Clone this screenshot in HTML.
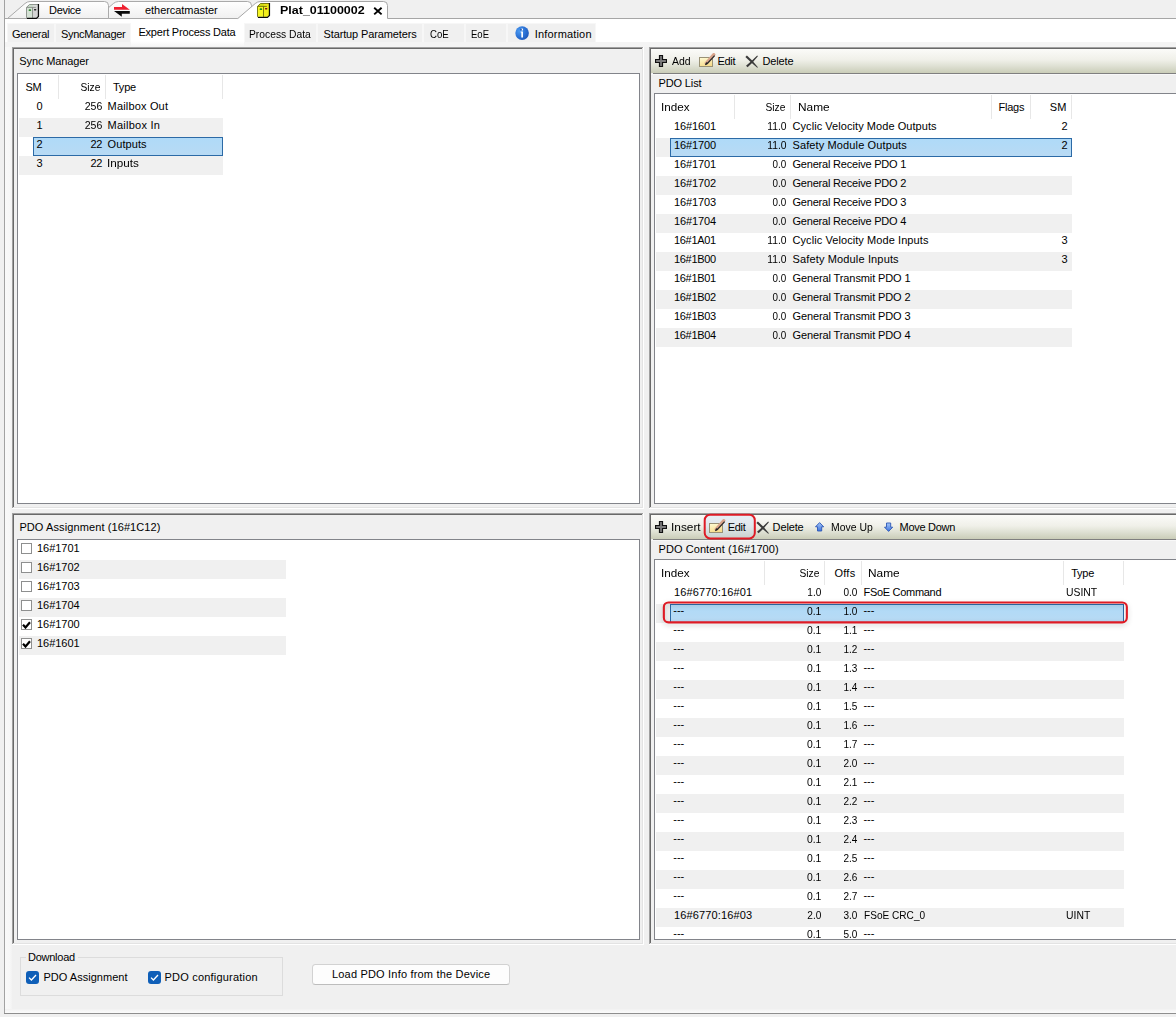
<!DOCTYPE html>
<html lang="en"><head><meta charset="utf-8"><title>Plat_01100002 - Expert Process Data</title>
<style>
html,body{margin:0;padding:0}
body{width:1176px;height:1017px;overflow:hidden;position:relative;background:#f0f0f0;font-family:"Liberation Sans",sans-serif;font-size:11px;color:#000}
body>div,body>svg,.t{position:absolute}
div{box-sizing:border-box}
.t{white-space:pre;line-height:13px;height:13px}
.b{font-weight:bold}
.lv{background:#fff;border:1px solid #82848a}
.tb{background:linear-gradient(#fbfbf9,#f0f0e9 45%,#dfe1d4 70%,#cacdb8)}

</style></head>
<body>
<div style="left:5px;top:19px;width:1171px;height:23px;background:#fff"></div>
<div style="left:5px;top:42px;width:7px;height:971px;background:linear-gradient(90deg,#f9f9f9,#f7f7f7 70%,#f2f2f2)"></div>
<div style="left:5px;top:1009px;width:1171px;height:4px;background:linear-gradient(#f2f2f2,#fbfbfb)"></div>
<div style="left:4px;top:18px;width:1172px;height:1px;background:#a6a6a6"></div>
<div style="left:4px;top:0px;width:1px;height:1014px;background:#a2a2a2"></div>
<div style="left:5px;top:42px;width:1171px;height:5px;background:#f4f4f4"></div>
<div style="left:4px;top:1013px;width:1172px;height:1px;background:#8e8e8e"></div>
<svg style="left:0;top:0" width="1176" height="20" viewBox="0 0 1176 20">
<defs><linearGradient id="tg" x1="0" y1="0" x2="0" y2="1"><stop offset="0" stop-color="#ffffff"/><stop offset="1" stop-color="#f0f0f0"/></linearGradient></defs>
<path d="M95.9 18.5 L113.4 3.5 Q115.4 1.6 118.6 1.5 L247.5 1.5 Q251.5 1.5 251.5 5.5 L251.5 18.5 Z" fill="url(#tg)" stroke="#aaa"/>
<path d="M7.5 18.5 L25 3.5 Q27 1.6 30.2 1.5 L104.5 1.5 Q108.5 1.5 108.5 5.5 L108.5 18.5 Z" fill="url(#tg)" stroke="#aaa"/>
<path d="M236.8 19.5 L255.3 3.5 Q257.3 1.6 260.5 1.5 L383.5 1.5 Q387.5 1.5 387.5 5.5 L387.5 19.5 Z" fill="#fff" stroke="none"/>
<path d="M237.8 18.5 L255.3 3.5 Q257.3 1.6 260.5 1.5 L383.5 1.5 Q387.5 1.5 387.5 5.5 L387.5 18.5" fill="none" stroke="#a6a6a6"/>
</svg>
<div style="left:7px;top:23px;width:48px;height:19px;background:#f0f0f0;border:1px solid #f7f7f7;border-bottom:0"></div>
<div style="left:55px;top:23px;width:76px;height:19px;background:#f0f0f0;border:1px solid #f7f7f7;border-bottom:0"></div>
<div style="left:244px;top:23px;width:73px;height:19px;background:#f0f0f0;border:1px solid #f7f7f7;border-bottom:0"></div>
<div style="left:317px;top:23px;width:106px;height:19px;background:#f0f0f0;border:1px solid #f7f7f7;border-bottom:0"></div>
<div style="left:423px;top:23px;width:42px;height:19px;background:#f0f0f0;border:1px solid #f7f7f7;border-bottom:0"></div>
<div style="left:465px;top:23px;width:42px;height:19px;background:#f0f0f0;border:1px solid #f7f7f7;border-bottom:0"></div>
<div style="left:507px;top:23px;width:89px;height:19px;background:#f0f0f0;border:1px solid #f7f7f7;border-bottom:0"></div>
<div style="left:131px;top:21px;width:113px;height:25px;background:linear-gradient(#fff 80%,#f6f6f6)"></div>
<div style="left:12px;top:47px;width:632px;height:1px;background:#a0a0a0"></div>
<div style="left:12px;top:47px;width:1px;height:462px;background:#a0a0a0"></div>
<div style="left:13px;top:48px;width:630px;height:1px;background:#696969"></div>
<div style="left:13px;top:48px;width:1px;height:460px;background:#696969"></div>
<div style="left:13px;top:507px;width:630px;height:1px;background:#e3e3e3"></div>
<div style="left:642px;top:48px;width:1px;height:460px;background:#e3e3e3"></div>
<div style="left:12px;top:508px;width:632px;height:1px;background:#fff"></div>
<div style="left:643px;top:47px;width:1px;height:462px;background:#fff"></div>
<div style="left:649px;top:47px;width:600px;height:1px;background:#a0a0a0"></div>
<div style="left:649px;top:47px;width:1px;height:462px;background:#a0a0a0"></div>
<div style="left:650px;top:48px;width:598px;height:1px;background:#696969"></div>
<div style="left:650px;top:48px;width:1px;height:460px;background:#696969"></div>
<div style="left:650px;top:507px;width:598px;height:1px;background:#e3e3e3"></div>
<div style="left:1247px;top:48px;width:1px;height:460px;background:#e3e3e3"></div>
<div style="left:649px;top:508px;width:600px;height:1px;background:#fff"></div>
<div style="left:1248px;top:47px;width:1px;height:462px;background:#fff"></div>
<div style="left:12px;top:513px;width:632px;height:1px;background:#a0a0a0"></div>
<div style="left:12px;top:513px;width:1px;height:432px;background:#a0a0a0"></div>
<div style="left:13px;top:514px;width:630px;height:1px;background:#696969"></div>
<div style="left:13px;top:514px;width:1px;height:430px;background:#696969"></div>
<div style="left:13px;top:943px;width:630px;height:1px;background:#e3e3e3"></div>
<div style="left:642px;top:514px;width:1px;height:430px;background:#e3e3e3"></div>
<div style="left:12px;top:944px;width:632px;height:1px;background:#fff"></div>
<div style="left:643px;top:513px;width:1px;height:432px;background:#fff"></div>
<div style="left:649px;top:513px;width:600px;height:1px;background:#a0a0a0"></div>
<div style="left:649px;top:513px;width:1px;height:432px;background:#a0a0a0"></div>
<div style="left:650px;top:514px;width:598px;height:1px;background:#696969"></div>
<div style="left:650px;top:514px;width:1px;height:430px;background:#696969"></div>
<div style="left:650px;top:943px;width:598px;height:1px;background:#e3e3e3"></div>
<div style="left:1247px;top:514px;width:1px;height:430px;background:#e3e3e3"></div>
<div style="left:649px;top:944px;width:600px;height:1px;background:#fff"></div>
<div style="left:1248px;top:513px;width:1px;height:432px;background:#fff"></div>
<div class="lv" style="left:17px;top:73px;width:623px;height:431px"></div>
<div style="left:58px;top:75px;width:1px;height:24px;background:#e7e7e7"></div>
<div style="left:105px;top:75px;width:1px;height:24px;background:#e7e7e7"></div>
<div style="left:222px;top:75px;width:1px;height:24px;background:#e7e7e7"></div>
<div style="left:19px;top:118px;width:204px;height:19px;background:#f0f0f0"></div>
<div style="left:33px;top:137px;width:190px;height:19px;background:linear-gradient(#afdaf8,#b8daf4);border:1px solid #2c6aa6"></div>
<div style="left:19px;top:156px;width:204px;height:19px;background:#f0f0f0"></div>
<div class="tb" style="left:651px;top:49px;width:600px;height:24px"></div>
<div style="left:653px;top:73px;width:600px;height:1px;background:#7f7f7f"></div>
<div style="left:651px;top:74px;width:600px;height:1px;background:#f8f8f8"></div>
<div class="lv" style="left:654px;top:93px;width:600px;height:411px"></div>
<div style="left:734px;top:95px;width:1px;height:24px;background:#e7e7e7"></div>
<div style="left:790px;top:95px;width:1px;height:24px;background:#e7e7e7"></div>
<div style="left:991px;top:95px;width:1px;height:24px;background:#e7e7e7"></div>
<div style="left:1030px;top:95px;width:1px;height:24px;background:#e7e7e7"></div>
<div style="left:1071px;top:95px;width:1px;height:24px;background:#e7e7e7"></div>
<div style="left:656px;top:138px;width:416px;height:19px;background:#f0f0f0"></div>
<div style="left:670px;top:138px;width:402px;height:19px;background:linear-gradient(#afdaf8,#b8daf4);border:1px solid #2c6aa6"></div>
<div style="left:656px;top:176px;width:416px;height:19px;background:#f0f0f0"></div>
<div style="left:656px;top:214px;width:416px;height:19px;background:#f0f0f0"></div>
<div style="left:656px;top:252px;width:416px;height:19px;background:#f0f0f0"></div>
<div style="left:656px;top:290px;width:416px;height:19px;background:#f0f0f0"></div>
<div style="left:656px;top:328px;width:416px;height:19px;background:#f0f0f0"></div>
<div class="lv" style="left:17px;top:539px;width:623px;height:401px"></div>
<div style="left:21px;top:543px;width:11px;height:11px;background:#fff;border:1px solid #8e8f8f"></div>
<div style="left:19px;top:560px;width:267px;height:19px;background:#f0f0f0"></div>
<div style="left:21px;top:562px;width:11px;height:11px;background:#fff;border:1px solid #8e8f8f"></div>
<div style="left:21px;top:581px;width:11px;height:11px;background:#fff;border:1px solid #8e8f8f"></div>
<div style="left:19px;top:598px;width:267px;height:19px;background:#f0f0f0"></div>
<div style="left:21px;top:600px;width:11px;height:11px;background:#fff;border:1px solid #8e8f8f"></div>
<div style="left:21px;top:619px;width:11px;height:11px;background:#fff;border:1px solid #8e8f8f"><svg width="9" height="9" viewBox="0 0 9 9" style="position:absolute;left:0;top:0"><path d="M1 4.7 L3.5 7.5 L8 2.2" fill="none" stroke="#000" stroke-width="2.2"/></svg></div>
<div style="left:19px;top:636px;width:267px;height:19px;background:#f0f0f0"></div>
<div style="left:21px;top:638px;width:11px;height:11px;background:#fff;border:1px solid #8e8f8f"><svg width="9" height="9" viewBox="0 0 9 9" style="position:absolute;left:0;top:0"><path d="M1 4.7 L3.5 7.5 L8 2.2" fill="none" stroke="#000" stroke-width="2.2"/></svg></div>
<div class="tb" style="left:651px;top:515px;width:600px;height:24px"></div>
<div style="left:653px;top:539px;width:600px;height:1px;background:#7f7f7f"></div>
<div style="left:651px;top:540px;width:600px;height:1px;background:#f8f8f8"></div>
<div class="lv" style="left:654px;top:559px;width:600px;height:381px"></div>
<div style="left:764px;top:561px;width:1px;height:24px;background:#e7e7e7"></div>
<div style="left:824px;top:561px;width:1px;height:24px;background:#e7e7e7"></div>
<div style="left:861px;top:561px;width:1px;height:24px;background:#e7e7e7"></div>
<div style="left:1063px;top:561px;width:1px;height:24px;background:#e7e7e7"></div>
<div style="left:1123px;top:561px;width:1px;height:24px;background:#e7e7e7"></div>
<div style="left:656px;top:604px;width:468px;height:19px;background:#f0f0f0"></div>
<div style="left:670px;top:604px;width:454px;height:19px;background:linear-gradient(#afdaf8,#b8daf4);border:1px solid #2c6aa6"></div>
<div style="left:656px;top:642px;width:468px;height:19px;background:#f0f0f0"></div>
<div style="left:656px;top:680px;width:468px;height:19px;background:#f0f0f0"></div>
<div style="left:656px;top:718px;width:468px;height:19px;background:#f0f0f0"></div>
<div style="left:656px;top:756px;width:468px;height:19px;background:#f0f0f0"></div>
<div style="left:656px;top:794px;width:468px;height:19px;background:#f0f0f0"></div>
<div style="left:656px;top:832px;width:468px;height:19px;background:#f0f0f0"></div>
<div style="left:656px;top:870px;width:468px;height:19px;background:#f0f0f0"></div>
<div style="left:656px;top:908px;width:468px;height:19px;background:#f0f0f0"></div>
<svg style="left:26px;top:4px" width="14" height="16" viewBox="0 0 14 16"><path d="M0.5 3.4 L3.5 0.5 L12 0.5 L12 12.2 L10.2 13.8 L0.5 13.8 Z" fill="#d5e2d5"/>
<path d="M6.5 0.5 L12 0.5 L12 12.2 L10.2 13.8 L6.5 13.8 Z" fill="#d4d4d4"/>
<path d="M0.5 3.4 L3.5 0.5 L12 0.5 L9.6 3.4 Z" fill="#c9dcc9"/>
<path d="M6.8 0.5 L12 0.5 L9.6 3.4 L6.8 3.4 Z" fill="#dadada"/>
<path d="M0.5 13.8 L0.5 3.4 L3.5 0.5 L12 0.5 M0.5 3.4 L9.8 3.4 M6.5 3.4 L6.5 13.8" fill="none" stroke="#868c86" stroke-width="0.9"/>
<path d="M12.45 0.1 L12.45 12.5 L10.4 14.35 L0.9 14.35" fill="none" stroke="#0a0a0a" stroke-width="1.25"/>
<rect x="2.7" y="5.3" width="2.4" height="1.8" rx="0.6" fill="#3a8a3a"/>
<rect x="8" y="4.9" width="2.3" height="1.5" rx="0.4" fill="#2c2c2c"/></svg>
<svg style="left:257px;top:3px" width="14" height="16" viewBox="0 0 14 16"><path d="M0.5 3.4 L3.5 0.5 L12 0.5 L12 12.2 L10.2 13.8 L0.5 13.8 Z" fill="#f6f622"/>
<path d="M6.5 0.5 L12 0.5 L12 12.2 L10.2 13.8 L6.5 13.8 Z" fill="#f2ee1a"/>
<path d="M0.5 3.4 L3.5 0.5 L12 0.5 L9.6 3.4 Z" fill="#d2de14"/>
<path d="M6.8 0.5 L12 0.5 L9.6 3.4 L6.8 3.4 Z" fill="#f0e61a"/>
<path d="M0.5 13.8 L0.5 3.4 L3.5 0.5 L12 0.5 M0.5 3.4 L9.8 3.4 M6.5 3.4 L6.5 13.8" fill="none" stroke="#6e6e0a" stroke-width="0.9"/>
<path d="M12.45 0.1 L12.45 12.5 L10.4 14.35 L0.9 14.35" fill="none" stroke="#0a0a0a" stroke-width="1.25"/>
<rect x="2.7" y="5.3" width="2.4" height="1.8" rx="0.6" fill="#1c8c1c"/>
<rect x="8" y="4.9" width="2.3" height="1.5" rx="0.4" fill="#861414"/></svg>
<svg style="left:113px;top:3px" width="18" height="15" viewBox="0 0 18 15"><path d="M1 4 L9 4 L9 1 L16.8 6.8 L1 6.8 Z" fill="#ee2030"/><path d="M1 8 L16.8 8 L16.8 10.8 L8.8 10.8 L8.8 13.8 Z" fill="#0a0a0a"/></svg>
<svg style="left:372px;top:6px" width="12" height="10" viewBox="0 0 12 10"><path d="M2.2 1.8 L9.6 8.4 M9.6 1.8 L2.2 8.4" stroke="#000" stroke-width="1.9" fill="none"/></svg>
<svg style="left:514px;top:25px" width="16" height="16" viewBox="0 0 16 16"><defs><radialGradient id="ig" cx="0.3" cy="0.35" r="0.8"><stop offset="0" stop-color="#4a9af2"/><stop offset="0.6" stop-color="#2a6fd2"/><stop offset="1" stop-color="#1c54b4"/></radialGradient></defs>
<circle cx="8.1" cy="8.1" r="6.8" fill="url(#ig)"/><rect x="7.2" y="3.6" width="1.8" height="1.9" fill="#fff"/><rect x="6.6" y="3.9" width="1" height="1.5" fill="#0c2a7a"/><path d="M6.6 6.6 L9 6.6 L9 12.4 L7.3 12.4 L7.3 7.6 L6.6 7.6 Z" fill="#fff"/></svg>
<svg style="left:700px;top:510px" width="60" height="34" viewBox="0 0 60 34"><rect x="4.7" y="4.7" width="50.1" height="23.7" rx="5.5" fill="rgba(196,216,242,0.35)" stroke="#de1b25" stroke-width="2"/></svg>
<svg style="left:655px;top:55px" width="12" height="12" viewBox="0 0 12 12"><path d="M4.5 0.5 L7.5 0.5 L7.5 4.5 L11.5 4.5 L11.5 7.5 L7.5 7.5 L7.5 11.5 L4.5 11.5 L4.5 7.5 L0.5 7.5 L0.5 4.5 L4.5 4.5 Z" fill="#7c7c7c" stroke="#111" stroke-width="1.2"/></svg>
<svg style="left:699px;top:52.5px" width="17" height="15" viewBox="0 0 17 15"><defs><linearGradient id="eg" x1="0" y1="0" x2="0.3" y2="1"><stop offset="0" stop-color="#fffcd8"/><stop offset="1" stop-color="#f7dd8e"/></linearGradient></defs>
<rect x="0.5" y="4.5" width="13" height="9" fill="url(#eg)" stroke="#9a9276"/>
<path d="M7.2 10.2 L14.8 1.6" stroke="#d9a58c" stroke-width="3.2" stroke-linecap="round" fill="none"/>
<path d="M6.3 11.6 L8.4 10.4 L15.6 2.6" stroke="#2c2c2c" stroke-width="1.3" fill="none"/>
<path d="M6 11.8 L7.6 9 L8.8 10.3 Z" fill="#222"/></svg>
<svg style="left:745px;top:54.5px" width="14" height="14" viewBox="0 0 14 14"><path d="M0.4 1.9 L1.9 0.4 L7.4 5.8 L12.9 12.2 L12.3 12.8 L5.9 7.3 Z" fill="#3a3a3a"/><path d="M12.2 0.6 L12.9 1.3 L7.6 7.6 L2.6 12.3 L1 10.7 L6.2 6.2 Z" fill="#3a3a3a"/></svg>
<svg style="left:655px;top:521px" width="12" height="12" viewBox="0 0 12 12"><path d="M4.5 0.5 L7.5 0.5 L7.5 4.5 L11.5 4.5 L11.5 7.5 L7.5 7.5 L7.5 11.5 L4.5 11.5 L4.5 7.5 L0.5 7.5 L0.5 4.5 L4.5 4.5 Z" fill="#7c7c7c" stroke="#111" stroke-width="1.2"/></svg>
<svg style="left:709px;top:518.5px" width="17" height="15" viewBox="0 0 17 15"><defs><linearGradient id="eg" x1="0" y1="0" x2="0.3" y2="1"><stop offset="0" stop-color="#fffcd8"/><stop offset="1" stop-color="#f7dd8e"/></linearGradient></defs>
<rect x="0.5" y="4.5" width="13" height="9" fill="url(#eg)" stroke="#9a9276"/>
<path d="M7.2 10.2 L14.8 1.6" stroke="#d9a58c" stroke-width="3.2" stroke-linecap="round" fill="none"/>
<path d="M6.3 11.6 L8.4 10.4 L15.6 2.6" stroke="#2c2c2c" stroke-width="1.3" fill="none"/>
<path d="M6 11.8 L7.6 9 L8.8 10.3 Z" fill="#222"/></svg>
<svg style="left:756px;top:520.5px" width="14" height="14" viewBox="0 0 14 14"><path d="M0.4 1.9 L1.9 0.4 L7.4 5.8 L12.9 12.2 L12.3 12.8 L5.9 7.3 Z" fill="#3a3a3a"/><path d="M12.2 0.6 L12.9 1.3 L7.6 7.6 L2.6 12.3 L1 10.7 L6.2 6.2 Z" fill="#3a3a3a"/></svg>
<svg style="left:815.2px;top:521.6px" width="10" height="10" viewBox="0 0 10 10"><defs><linearGradient id="ug" x1="0" y1="0" x2="0" y2="1"><stop offset="0" stop-color="#a6c8fa"/><stop offset="1" stop-color="#3f74dc"/></linearGradient></defs>
<path d="M4.6 0.6 L8.7 4.8 L6.7 4.8 L6.7 9 L2.5 9 L2.5 4.8 L0.5 4.8 Z" fill="url(#ug)" stroke="#2d57b4" stroke-width="0.9"/></svg>
<svg style="left:884px;top:522.2px" width="10" height="10" viewBox="0 0 10 10"><defs><linearGradient id="dg" x1="0" y1="0" x2="0" y2="1"><stop offset="0" stop-color="#a6c8fa"/><stop offset="1" stop-color="#3f74dc"/></linearGradient></defs>
<path d="M4.6 9.4 L8.7 5.2 L6.7 5.2 L6.7 1 L2.5 1 L2.5 5.2 L0.5 5.2 Z" fill="url(#dg)" stroke="#2d57b4" stroke-width="0.9"/></svg>
<svg style="left:656px;top:596px;filter:drop-shadow(0 2px 2.5px rgba(0,0,0,.2))" width="480" height="36" viewBox="0 0 480 36"><rect x="7.85" y="6.5" width="463" height="19.9" rx="4.6" fill="none" stroke="#de1b25" stroke-width="2.1"/></svg>
<div style="left:20px;top:957px;width:263px;height:39px;border:1px solid #dcdcdc"></div>
<div style="left:26px;top:951px;width:52px;height:12px;background:#f0f0f0"></div>
<div style="left:26px;top:971px;width:13px;height:13px;background:#0f5fb8;border-radius:3px"><svg width="13" height="13" viewBox="0 0 13 13" style="position:absolute;left:0;top:0"><path d="M3 6.6 L5.4 9 L10 4" fill="none" stroke="#fff" stroke-width="1.3"/></svg></div>
<div style="left:148px;top:971px;width:13px;height:13px;background:#0f5fb8;border-radius:3px"><svg width="13" height="13" viewBox="0 0 13 13" style="position:absolute;left:0;top:0"><path d="M3 6.6 L5.4 9 L10 4" fill="none" stroke="#fff" stroke-width="1.3"/></svg></div>
<div style="left:312px;top:964px;width:198px;height:21px;background:#fdfdfd;border:1px solid #d2d2d2;border-bottom-color:#bdbdbd;border-radius:3.5px"></div>
<span class="t" id="t0" style="top:4px;left:49.00px;letter-spacing:-0.301px;">Device</span>
<span class="t" id="t1" style="top:4px;left:145.00px;letter-spacing:-0.054px;">ethercatmaster</span>
<span class="t b" id="t2" style="top:4px;left:279.50px;transform-origin:0 0;transform:scaleX(1.1341);">Plat_01100002</span>
<span class="t" id="t3" style="top:28px;left:12.00px;letter-spacing:-0.282px;">General</span>
<span class="t" id="t4" style="top:28px;left:61.00px;letter-spacing:-0.321px;">SyncManager</span>
<span class="t" id="t5" style="top:26px;left:138.40px;letter-spacing:-0.198px;">Expert Process Data</span>
<span class="t" id="t6" style="top:28px;left:248.70px;transform-origin:0 0;transform:scaleX(0.9356);">Process Data</span>
<span class="t" id="t7" style="top:28px;left:323.50px;letter-spacing:-0.122px;">Startup Parameters</span>
<span class="t" id="t8" style="top:28px;left:429.60px;transform-origin:0 0;transform:scaleX(0.8737);">CoE</span>
<span class="t" id="t9" style="top:28px;left:471.40px;transform-origin:0 0;transform:scaleX(0.8655);">EoE</span>
<span class="t" id="t10" style="top:28px;left:534.80px;letter-spacing:0.169px;">Information</span>
<span class="t" id="t11" style="top:55px;left:19.30px;letter-spacing:-0.115px;">Sync Manager</span>
<span class="t" id="t12" style="top:81px;left:25.40px;letter-spacing:-0.137px;">SM</span>
<span class="t" id="t13" style="top:81px;right:1075.89px;transform-origin:100% 0;transform:scaleX(0.9305);">Size</span>
<span class="t" id="t14" style="top:81px;left:113.00px;letter-spacing:-0.243px;">Type</span>
<span class="t" id="t15" style="top:100px;left:36.50px;">0</span>
<span class="t" id="t16" style="top:100px;right:1073.58px;transform-origin:100% 0;transform:scaleX(0.9594);">256</span>
<span class="t" id="t17" style="top:100px;left:107.60px;letter-spacing:0.167px;">Mailbox Out</span>
<span class="t" id="t18" style="top:119px;left:36.50px;">1</span>
<span class="t" id="t19" style="top:119px;right:1073.58px;transform-origin:100% 0;transform:scaleX(0.9594);">256</span>
<span class="t" id="t20" style="top:119px;left:107.60px;letter-spacing:0.232px;">Mailbox In</span>
<span class="t" id="t21" style="top:138px;left:36.50px;">2</span>
<span class="t" id="t22" style="top:138px;right:1073.80px;letter-spacing:-0.218px;">22</span>
<span class="t" id="t23" style="top:138px;left:107.60px;letter-spacing:0.080px;">Outputs</span>
<span class="t" id="t24" style="top:157px;left:36.50px;">3</span>
<span class="t" id="t25" style="top:157px;right:1073.80px;letter-spacing:-0.218px;">22</span>
<span class="t" id="t26" style="top:157px;left:106.54px;transform-origin:0 0;transform:scaleX(1.0621);">Inputs</span>
<span class="t" id="t27" style="top:55px;left:672.00px;transform-origin:0 0;transform:scaleX(0.9512);">Add</span>
<span class="t" id="t28" style="top:55px;left:717.50px;letter-spacing:-0.299px;">Edit</span>
<span class="t" id="t29" style="top:55px;left:762.40px;letter-spacing:-0.136px;">Delete</span>
<span class="t" id="t30" style="top:77px;left:658.50px;letter-spacing:-0.136px;">PDO List</span>
<span class="t" id="t31" style="top:101px;left:661.34px;transform-origin:0 0;transform:scaleX(1.0602);">Index</span>
<span class="t" id="t32" style="top:101px;right:390.89px;transform-origin:100% 0;transform:scaleX(0.9305);">Size</span>
<span class="t" id="t33" style="top:101px;left:797.70px;transform-origin:0 0;transform:scaleX(1.0780);">Name</span>
<span class="t" id="t34" style="top:101px;left:998.50px;letter-spacing:-0.225px;">Flags</span>
<span class="t" id="t35" style="top:101px;right:109.38px;letter-spacing:0.163px;">SM</span>
<span class="t" id="t36" style="top:120px;left:674.00px;letter-spacing:-0.118px;">16#1601</span>
<span class="t" id="t37" style="top:120px;right:389.69px;transform-origin:100% 0;transform:scaleX(0.9375);">11.0</span>
<span class="t" id="t38" style="top:120px;left:792.50px;letter-spacing:0.061px;">Cyclic Velocity Mode Outputs</span>
<span class="t" id="t39" style="top:120px;right:108.38px;">2</span>
<span class="t" id="t40" style="top:139px;left:674.00px;letter-spacing:-0.118px;">16#1700</span>
<span class="t" id="t41" style="top:139px;right:389.69px;transform-origin:100% 0;transform:scaleX(0.9375);">11.0</span>
<span class="t" id="t42" style="top:139px;left:792.50px;letter-spacing:0.120px;">Safety Module Outputs</span>
<span class="t" id="t43" style="top:139px;right:108.38px;">2</span>
<span class="t" id="t44" style="top:158px;left:674.00px;letter-spacing:-0.118px;">16#1701</span>
<span class="t" id="t45" style="top:158px;right:389.69px;transform-origin:100% 0;transform:scaleX(0.8965);">0.0</span>
<span class="t" id="t46" style="top:158px;left:792.50px;letter-spacing:-0.204px;">General Receive PDO 1</span>
<span class="t" id="t47" style="top:177px;left:674.00px;letter-spacing:-0.118px;">16#1702</span>
<span class="t" id="t48" style="top:177px;right:389.69px;transform-origin:100% 0;transform:scaleX(0.8965);">0.0</span>
<span class="t" id="t49" style="top:177px;left:792.50px;letter-spacing:-0.204px;">General Receive PDO 2</span>
<span class="t" id="t50" style="top:196px;left:674.00px;letter-spacing:-0.118px;">16#1703</span>
<span class="t" id="t51" style="top:196px;right:389.69px;transform-origin:100% 0;transform:scaleX(0.8965);">0.0</span>
<span class="t" id="t52" style="top:196px;left:792.50px;letter-spacing:-0.204px;">General Receive PDO 3</span>
<span class="t" id="t53" style="top:215px;left:674.00px;letter-spacing:-0.118px;">16#1704</span>
<span class="t" id="t54" style="top:215px;right:389.69px;transform-origin:100% 0;transform:scaleX(0.8965);">0.0</span>
<span class="t" id="t55" style="top:215px;left:792.50px;letter-spacing:-0.204px;">General Receive PDO 4</span>
<span class="t" id="t56" style="top:234px;left:674.00px;letter-spacing:-0.321px;">16#1A01</span>
<span class="t" id="t57" style="top:234px;right:389.69px;transform-origin:100% 0;transform:scaleX(0.9375);">11.0</span>
<span class="t" id="t58" style="top:234px;left:792.50px;letter-spacing:0.077px;">Cyclic Velocity Mode Inputs</span>
<span class="t" id="t59" style="top:234px;right:108.38px;">3</span>
<span class="t" id="t60" style="top:253px;left:674.00px;letter-spacing:-0.321px;">16#1B00</span>
<span class="t" id="t61" style="top:253px;right:389.69px;transform-origin:100% 0;transform:scaleX(0.9375);">11.0</span>
<span class="t" id="t62" style="top:253px;left:792.50px;letter-spacing:0.145px;">Safety Module Inputs</span>
<span class="t" id="t63" style="top:253px;right:108.38px;">3</span>
<span class="t" id="t64" style="top:272px;left:674.00px;letter-spacing:-0.321px;">16#1B01</span>
<span class="t" id="t65" style="top:272px;right:389.69px;transform-origin:100% 0;transform:scaleX(0.8965);">0.0</span>
<span class="t" id="t66" style="top:272px;left:792.50px;letter-spacing:-0.110px;">General Transmit PDO 1</span>
<span class="t" id="t67" style="top:291px;left:674.00px;letter-spacing:-0.321px;">16#1B02</span>
<span class="t" id="t68" style="top:291px;right:389.69px;transform-origin:100% 0;transform:scaleX(0.8965);">0.0</span>
<span class="t" id="t69" style="top:291px;left:792.50px;letter-spacing:-0.110px;">General Transmit PDO 2</span>
<span class="t" id="t70" style="top:310px;left:674.00px;letter-spacing:-0.321px;">16#1B03</span>
<span class="t" id="t71" style="top:310px;right:389.69px;transform-origin:100% 0;transform:scaleX(0.8965);">0.0</span>
<span class="t" id="t72" style="top:310px;left:792.50px;letter-spacing:-0.110px;">General Transmit PDO 3</span>
<span class="t" id="t73" style="top:329px;left:674.00px;letter-spacing:-0.321px;">16#1B04</span>
<span class="t" id="t74" style="top:329px;right:389.69px;transform-origin:100% 0;transform:scaleX(0.8965);">0.0</span>
<span class="t" id="t75" style="top:329px;left:792.50px;letter-spacing:-0.110px;">General Transmit PDO 4</span>
<span class="t" id="t76" style="top:521px;left:19.40px;letter-spacing:0.099px;">PDO Assignment (16#1C12)</span>
<span class="t" id="t77" style="top:542px;left:37.00px;letter-spacing:-0.034px;">16#1701</span>
<span class="t" id="t78" style="top:561px;left:37.00px;letter-spacing:-0.034px;">16#1702</span>
<span class="t" id="t79" style="top:580px;left:37.00px;letter-spacing:-0.034px;">16#1703</span>
<span class="t" id="t80" style="top:599px;left:37.00px;letter-spacing:-0.034px;">16#1704</span>
<span class="t" id="t81" style="top:618px;left:37.00px;letter-spacing:-0.034px;">16#1700</span>
<span class="t" id="t82" style="top:637px;left:37.00px;letter-spacing:-0.034px;">16#1601</span>
<span class="t" id="t83" style="top:521px;left:670.92px;transform-origin:0 0;transform:scaleX(1.0775);">Insert</span>
<span class="t" id="t84" style="top:521px;left:727.70px;letter-spacing:-0.299px;">Edit</span>
<span class="t" id="t85" style="top:521px;left:772.60px;letter-spacing:-0.136px;">Delete</span>
<span class="t" id="t86" style="top:521px;left:830.70px;transform-origin:0 0;transform:scaleX(0.9476);">Move Up</span>
<span class="t" id="t87" style="top:521px;left:899.60px;letter-spacing:-0.295px;">Move Down</span>
<span class="t" id="t88" style="top:543px;left:658.50px;letter-spacing:0.077px;">PDO Content (16#1700)</span>
<span class="t" id="t89" style="top:567px;left:661.34px;transform-origin:0 0;transform:scaleX(1.0602);">Index</span>
<span class="t" id="t90" style="top:567px;right:356.89px;transform-origin:100% 0;transform:scaleX(0.9305);">Size</span>
<span class="t" id="t91" style="top:567px;left:834.40px;letter-spacing:0.277px;">Offs</span>
<span class="t" id="t92" style="top:567px;left:868.40px;transform-origin:0 0;transform:scaleX(1.0780);">Name</span>
<span class="t" id="t93" style="top:567px;left:1071.20px;letter-spacing:-0.243px;">Type</span>
<span class="t" id="t94" style="top:586px;left:674.00px;letter-spacing:0.137px;">16#6770:16#01</span>
<span class="t" id="t95" style="top:586px;right:355.19px;transform-origin:100% 0;transform:scaleX(0.9163);">1.0</span>
<span class="t" id="t96" style="top:586px;right:318.39px;transform-origin:100% 0;transform:scaleX(0.9097);">0.0</span>
<span class="t" id="t97" style="top:586px;left:863.50px;letter-spacing:-0.299px;">FSoE Command</span>
<span class="t" id="t98" style="top:586px;left:1065.60px;transform-origin:0 0;transform:scaleX(0.9435);">USINT</span>
<span class="t" id="t99" style="top:604px;left:673.30px;letter-spacing:-0.063px;">---</span>
<span class="t" id="t100" style="top:605px;right:355.19px;transform-origin:100% 0;transform:scaleX(0.9426);">0.1</span>
<span class="t" id="t101" style="top:605px;right:318.39px;transform-origin:100% 0;transform:scaleX(0.9097);">1.0</span>
<span class="t" id="t102" style="top:604px;left:863.50px;letter-spacing:-0.063px;">---</span>
<span class="t" id="t103" style="top:623px;left:673.30px;letter-spacing:-0.063px;">---</span>
<span class="t" id="t104" style="top:624px;right:355.19px;transform-origin:100% 0;transform:scaleX(0.9426);">0.1</span>
<span class="t" id="t105" style="top:624px;right:318.39px;transform-origin:100% 0;transform:scaleX(0.9097);">1.1</span>
<span class="t" id="t106" style="top:623px;left:863.50px;letter-spacing:-0.063px;">---</span>
<span class="t" id="t107" style="top:642px;left:673.30px;letter-spacing:-0.063px;">---</span>
<span class="t" id="t108" style="top:643px;right:355.19px;transform-origin:100% 0;transform:scaleX(0.9426);">0.1</span>
<span class="t" id="t109" style="top:643px;right:318.39px;transform-origin:100% 0;transform:scaleX(0.9097);">1.2</span>
<span class="t" id="t110" style="top:642px;left:863.50px;letter-spacing:-0.063px;">---</span>
<span class="t" id="t111" style="top:661px;left:673.30px;letter-spacing:-0.063px;">---</span>
<span class="t" id="t112" style="top:662px;right:355.19px;transform-origin:100% 0;transform:scaleX(0.9426);">0.1</span>
<span class="t" id="t113" style="top:662px;right:318.39px;transform-origin:100% 0;transform:scaleX(0.9097);">1.3</span>
<span class="t" id="t114" style="top:661px;left:863.50px;letter-spacing:-0.063px;">---</span>
<span class="t" id="t115" style="top:680px;left:673.30px;letter-spacing:-0.063px;">---</span>
<span class="t" id="t116" style="top:681px;right:355.19px;transform-origin:100% 0;transform:scaleX(0.9426);">0.1</span>
<span class="t" id="t117" style="top:681px;right:318.39px;transform-origin:100% 0;transform:scaleX(0.9097);">1.4</span>
<span class="t" id="t118" style="top:680px;left:863.50px;letter-spacing:-0.063px;">---</span>
<span class="t" id="t119" style="top:699px;left:673.30px;letter-spacing:-0.063px;">---</span>
<span class="t" id="t120" style="top:700px;right:355.19px;transform-origin:100% 0;transform:scaleX(0.9426);">0.1</span>
<span class="t" id="t121" style="top:700px;right:318.39px;transform-origin:100% 0;transform:scaleX(0.9097);">1.5</span>
<span class="t" id="t122" style="top:699px;left:863.50px;letter-spacing:-0.063px;">---</span>
<span class="t" id="t123" style="top:718px;left:673.30px;letter-spacing:-0.063px;">---</span>
<span class="t" id="t124" style="top:719px;right:355.19px;transform-origin:100% 0;transform:scaleX(0.9426);">0.1</span>
<span class="t" id="t125" style="top:719px;right:318.39px;transform-origin:100% 0;transform:scaleX(0.9097);">1.6</span>
<span class="t" id="t126" style="top:718px;left:863.50px;letter-spacing:-0.063px;">---</span>
<span class="t" id="t127" style="top:737px;left:673.30px;letter-spacing:-0.063px;">---</span>
<span class="t" id="t128" style="top:738px;right:355.19px;transform-origin:100% 0;transform:scaleX(0.9426);">0.1</span>
<span class="t" id="t129" style="top:738px;right:318.39px;transform-origin:100% 0;transform:scaleX(0.9097);">1.7</span>
<span class="t" id="t130" style="top:737px;left:863.50px;letter-spacing:-0.063px;">---</span>
<span class="t" id="t131" style="top:756px;left:673.30px;letter-spacing:-0.063px;">---</span>
<span class="t" id="t132" style="top:757px;right:355.19px;transform-origin:100% 0;transform:scaleX(0.9426);">0.1</span>
<span class="t" id="t133" style="top:757px;right:318.39px;transform-origin:100% 0;transform:scaleX(0.9097);">2.0</span>
<span class="t" id="t134" style="top:756px;left:863.50px;letter-spacing:-0.063px;">---</span>
<span class="t" id="t135" style="top:775px;left:673.30px;letter-spacing:-0.063px;">---</span>
<span class="t" id="t136" style="top:776px;right:355.19px;transform-origin:100% 0;transform:scaleX(0.9426);">0.1</span>
<span class="t" id="t137" style="top:776px;right:318.39px;transform-origin:100% 0;transform:scaleX(0.9097);">2.1</span>
<span class="t" id="t138" style="top:775px;left:863.50px;letter-spacing:-0.063px;">---</span>
<span class="t" id="t139" style="top:794px;left:673.30px;letter-spacing:-0.063px;">---</span>
<span class="t" id="t140" style="top:795px;right:355.19px;transform-origin:100% 0;transform:scaleX(0.9426);">0.1</span>
<span class="t" id="t141" style="top:795px;right:318.39px;transform-origin:100% 0;transform:scaleX(0.9097);">2.2</span>
<span class="t" id="t142" style="top:794px;left:863.50px;letter-spacing:-0.063px;">---</span>
<span class="t" id="t143" style="top:813px;left:673.30px;letter-spacing:-0.063px;">---</span>
<span class="t" id="t144" style="top:814px;right:355.19px;transform-origin:100% 0;transform:scaleX(0.9426);">0.1</span>
<span class="t" id="t145" style="top:814px;right:318.39px;transform-origin:100% 0;transform:scaleX(0.9097);">2.3</span>
<span class="t" id="t146" style="top:813px;left:863.50px;letter-spacing:-0.063px;">---</span>
<span class="t" id="t147" style="top:832px;left:673.30px;letter-spacing:-0.063px;">---</span>
<span class="t" id="t148" style="top:833px;right:355.19px;transform-origin:100% 0;transform:scaleX(0.9426);">0.1</span>
<span class="t" id="t149" style="top:833px;right:318.39px;transform-origin:100% 0;transform:scaleX(0.9097);">2.4</span>
<span class="t" id="t150" style="top:832px;left:863.50px;letter-spacing:-0.063px;">---</span>
<span class="t" id="t151" style="top:851px;left:673.30px;letter-spacing:-0.063px;">---</span>
<span class="t" id="t152" style="top:852px;right:355.19px;transform-origin:100% 0;transform:scaleX(0.9426);">0.1</span>
<span class="t" id="t153" style="top:852px;right:318.39px;transform-origin:100% 0;transform:scaleX(0.9097);">2.5</span>
<span class="t" id="t154" style="top:851px;left:863.50px;letter-spacing:-0.063px;">---</span>
<span class="t" id="t155" style="top:870px;left:673.30px;letter-spacing:-0.063px;">---</span>
<span class="t" id="t156" style="top:871px;right:355.19px;transform-origin:100% 0;transform:scaleX(0.9426);">0.1</span>
<span class="t" id="t157" style="top:871px;right:318.39px;transform-origin:100% 0;transform:scaleX(0.9097);">2.6</span>
<span class="t" id="t158" style="top:870px;left:863.50px;letter-spacing:-0.063px;">---</span>
<span class="t" id="t159" style="top:889px;left:673.30px;letter-spacing:-0.063px;">---</span>
<span class="t" id="t160" style="top:890px;right:355.19px;transform-origin:100% 0;transform:scaleX(0.9426);">0.1</span>
<span class="t" id="t161" style="top:890px;right:318.39px;transform-origin:100% 0;transform:scaleX(0.9097);">2.7</span>
<span class="t" id="t162" style="top:889px;left:863.50px;letter-spacing:-0.063px;">---</span>
<span class="t" id="t163" style="top:909px;left:674.00px;letter-spacing:0.137px;">16#6770:16#03</span>
<span class="t" id="t164" style="top:909px;right:355.19px;transform-origin:100% 0;transform:scaleX(0.9163);">2.0</span>
<span class="t" id="t165" style="top:909px;right:318.39px;transform-origin:100% 0;transform:scaleX(0.9097);">3.0</span>
<span class="t" id="t166" style="top:909px;left:863.50px;transform-origin:0 0;transform:scaleX(0.9170);">FSoE CRC_0</span>
<span class="t" id="t167" style="top:909px;left:1065.60px;transform-origin:0 0;transform:scaleX(0.9445);">UINT</span>
<span class="t" id="t168" style="top:927px;left:673.30px;letter-spacing:-0.063px;">---</span>
<span class="t" id="t169" style="top:928px;right:355.19px;transform-origin:100% 0;transform:scaleX(0.9426);">0.1</span>
<span class="t" id="t170" style="top:928px;right:318.39px;transform-origin:100% 0;transform:scaleX(0.9097);">5.0</span>
<span class="t" id="t171" style="top:927px;left:863.50px;letter-spacing:-0.063px;">---</span>
<span class="t" id="t172" style="top:951px;left:28.00px;letter-spacing:-0.257px;">Download</span>
<span class="t" id="t173" style="top:971px;left:43.50px;letter-spacing:0.015px;">PDO Assignment</span>
<span class="t" id="t174" style="top:971px;left:164.50px;letter-spacing:0.202px;">PDO configuration</span>
<span class="t" id="t175" style="top:968px;left:332.00px;letter-spacing:0.188px;">Load PDO Info from the Device</span>
</body></html>
